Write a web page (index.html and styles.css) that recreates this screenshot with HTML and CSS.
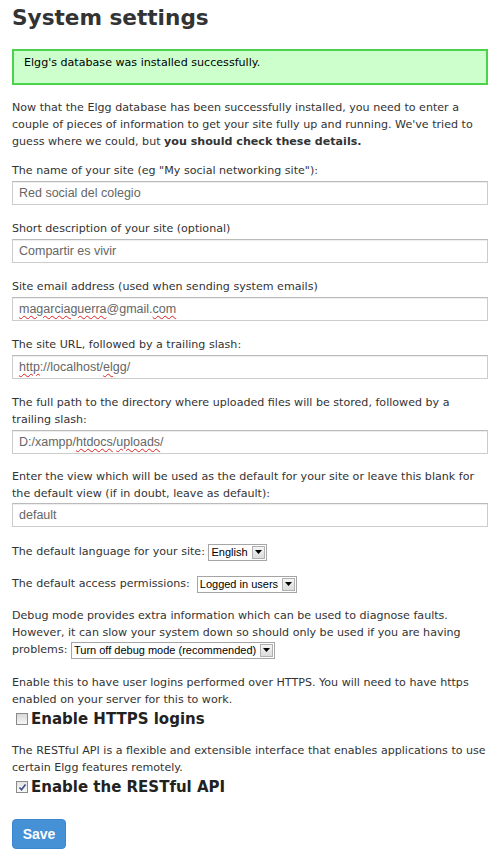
FILE: index.html
```html
<!DOCTYPE html>
<html lang="en">
<head>
<meta charset="utf-8">
<title>System settings</title>
<link rel="stylesheet" href="styles.css">
</head>
<body>
<div class="page">
  <h1 class="title">System settings</h1>
  <div class="message success"><p>Elgg's database was installed successfully.</p></div>
  <p class="intro">Now that the Elgg database has been successfully installed, you need to enter a couple of pieces of information to get your site fully up and running. We've tried to guess where we could, but <b>you should check these details.</b></p>

  <form class="settings">
    <div class="field">
      <label class="label">The name of your site (eg "My social networking site"):</label>
      <input class="text" type="text" value="Red social del colegio">
    </div>
    <div class="field">
      <label class="label">Short description of your site (optional)</label>
      <input class="text" type="text" value="Compartir es vivir">
    </div>
    <div class="field">
      <label class="label">Site email address (used when sending system emails)</label>
      <div class="text fake"><span class="spell">magarciaguerra</span>@gmail.<span class="spell">com</span></div>
    </div>
    <div class="field">
      <label class="label">The site URL, followed by a trailing slash:</label>
      <div class="text fake"><span class="spell">http</span>://localhost/<span class="spell">elgg</span>/</div>
    </div>
    <div class="field tight">
      <label class="label">The full path to the directory where uploaded files will be stored, followed by a trailing slash:</label>
      <div class="text fake">D:/xampp/<span class="spell">htdocs</span>/<span class="spell">uploads</span>/</div>
    </div>
    <div class="field last">
      <label class="label">Enter the view which will be used as the default for your site or leave this blank for the default view (if in doubt, leave as default):</label>
      <input class="text" type="text" value="default">
    </div>
    <div class="row">The default language for your site: <span class="select"><span class="select-value">English</span><span class="select-arrow"><svg width="7" height="4" viewBox="0 0 7 4"><path d="M0 0h7L3.5 4z" fill="#000"/></svg></span></span></div>
    <div class="row">The default access permissions: &nbsp;<span class="select"><span class="select-value">Logged in users</span><span class="select-arrow"><svg width="7" height="4" viewBox="0 0 7 4"><path d="M0 0h7L3.5 4z" fill="#000"/></svg></span></span></div>
    <div class="row debug">Debug mode provides extra information which can be used to diagnose faults. However, it can slow your system down so should only be used if you are having problems: <span class="select"><span class="select-value">Turn off debug mode (recommended)</span><span class="select-arrow"><svg width="7" height="4" viewBox="0 0 7 4"><path d="M0 0h7L3.5 4z" fill="#000"/></svg></span></span></div>
    <div class="check-block">
      <p class="row-text">Enable this to have user logins performed over HTTPS. You will need to have https enabled on your server for this to work.</p>
      <label class="check"><span class="box"></span>Enable HTTPS logins</label>
    </div>
    <div class="check-block">
      <p class="row-text">The RESTful API is a flexible and extensible interface that enables applications to use certain Elgg features remotely.</p>
      <label class="check"><span class="box checked"><svg width="9" height="9" viewBox="0 0 9 9"><path d="M1.5 4.5l2 2.2L7.5 1.5" fill="none" stroke="#3a4f8a" stroke-width="1.6"/></svg></span>Enable the RESTful API</label>
    </div>
    <div class="actions"><button class="save" type="button">Save</button></div>
  </form>
</div>
</body>
</html>
```

FILE: styles.css
```css
html, body {
  margin: 0;
  padding: 0;
  background: #fff;
}
body {
  font-family: "DejaVu Sans", Verdana, sans-serif;
  font-size: 11.1px;
  line-height: 17px;
  color: #333;
}
.page {
  width: 476px;
  padding: 0 12px;
}
.title {
  margin: 0;
  padding-top: 3px;
  font-size: 21.6px;
  line-height: 30px;
  font-weight: bold;
  color: #333;
  height: 46px;
}
.message {
  border: 2px solid #4bd34b;
  background: #ccffcc;
  padding: 3px 10px 12px;
  margin-bottom: 14px;
  color: #000;
}
.message p {
  margin: 0;
}
.intro {
  margin: 0 0 12px;
}
.settings {
  margin: 0;
}
.field {
  margin-bottom: 15.5px;
}
.field.tight {
  margin-bottom: 14px;
}
.field.last {
  margin-bottom: 16px;
}
.label {
  display: block;
}
.text {
  display: block;
  box-sizing: border-box;
  width: 476px;
  height: 24px;
  margin-top: 1.5px;
  border: 1px solid #ccc;
  border-top-color: #bbb;
  box-shadow: inset 0 1px 0 #eee;
  padding: 0 0 0 6px;
  font-family: "Liberation Sans", Arial, sans-serif;
  font-size: 12.5px;
  line-height: 22px;
  color: #666;
  background: #fff;
  outline: none;
}
.spell {
  text-decoration: underline wavy #e02020;
  text-decoration-thickness: 1px;
  text-underline-offset: 2px;
}
.row {
  margin-bottom: 15px;
}
.row.debug {
  margin-bottom: 16px;
}
.select {
  display: inline-flex;
  align-items: stretch;
  height: 17px;
  box-sizing: border-box;
  border: 1px solid #a5a5a5;
  vertical-align: middle;
  margin-top: -2px;
  margin-bottom: -2px;
  font-family: "Liberation Sans", Arial, sans-serif;
  font-size: 11px;
  line-height: 15px;
  color: #000;
  background: #fff;
}
.select-value {
  padding: 0 3px 0 2px;
}
.select-arrow {
  width: 13px;
  display: flex;
  align-items: center;
  justify-content: center;
  box-sizing: border-box;
  margin: 1px;
  border: 1px solid #b0b0b0;
  background: linear-gradient(#f4f4f4, #dcdcdc);
}
.check-block {
  margin-bottom: 13px;
}
.row-text {
  margin: 0;
}
.check {
  display: flex;
  align-items: center;
  font-size: 15px;
  line-height: 20px;
  font-weight: bold;
  color: #222;
  margin-top: 1px;
}
.box {
  width: 12px;
  height: 12px;
  box-sizing: border-box;
  border: 1px solid #8a8a8a;
  background: linear-gradient(#d8d8d8, #f6f6f6);
  margin: 0 3px 0 4px;
  display: flex;
  align-items: center;
  justify-content: center;
}
.box.checked {
  background: linear-gradient(#e4e4e4, #f8f8f8);
}
.actions {
  padding-top: 9px;
}
.save {
  width: 54px;
  height: 30px;
  border: 1px solid #3b86d0;
  border-radius: 4px;
  background: #4690d6;
  color: #fff;
  font-family: "Liberation Sans", Arial, sans-serif;
  font-size: 14px;
  font-weight: bold;
  padding: 0;
  cursor: pointer;
}
```
